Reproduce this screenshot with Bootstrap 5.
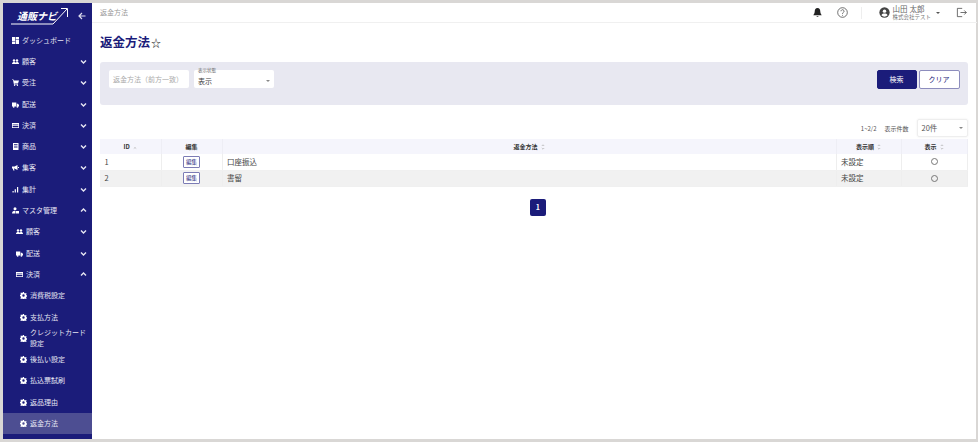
<!DOCTYPE html>
<html lang="ja">
<head>
    <meta charset="UTF-8">
    <meta name="viewport" content="width=device-width, initial-scale=1.0">
    <title>返金方法</title>
    <link href="https://cdn.jsdelivr.net/npm/bootstrap@5.3.0/dist/css/bootstrap.min.css" rel="stylesheet">
    <style>
        html, body { height: 100%; overflow: hidden; }
        body {
            background: #d9d7d5;
            padding: 3px 2px 3px 3px;
            font-family: "Noto Sans CJK JP", "Liberation Sans", sans-serif;
            font-size: 7px;
            color: #444;
        }
        .app-frame { height: 436px; background: #fff; }
        .side-bar { width: 89px; background: #1b1c7a; color: #e6e6f2; flex-shrink: 0; }
        .side-logo { height: 26.5px; padding: 3px 6px 0 8px; }
        .back-arrow { margin-top: 5.5px; }
        .side-item { height: 21.3px; padding: 0 5px 0 9px; gap: 3px; white-space: nowrap; }
        .side-item .side-label { flex: 1; line-height: 11px; white-space: normal; }
        .side-item.lvl-2 { padding-left: 13px; }
        .side-item.lvl-3 { padding-left: 17px; }
        .side-item.is-active { background: #4d4e92; }
        .side-ic { width: 7px; height: 7px; flex-shrink: 0; fill: #fff; }
        .side-chev { width: 7px; height: 7px; flex-shrink: 0; fill: none; stroke: #e6e6f2; stroke-width: 1.4; }
        .top-bar { height: 20px; border-bottom: 1px solid #f0f0f0; padding: 0 10px 0 8px; color: #999; }
        .top-ic { width: 11px; height: 11px; flex-shrink: 0; }
        .top-gap { margin-left: 14px; }
        .top-sep { width: 1px; height: 12px; background: #eee; margin: 0 17px 0 12.500px; }
        .top-user { margin-left: 2.500px; font-family: "Liberation Sans", "Noto Sans CJK JP", sans-serif; }
        .user-name { font-size: 7.500px; line-height: 9px; color: #666; }
        .user-co { font-size: 5.500px; line-height: 7px; color: #777; }
        .user-caret { border-top: 2px solid #555; border-left: 2px solid transparent; border-right: 2px solid transparent; margin: 0 16px 0 4.500px; }
        .page-body { padding: 0 9px 0 8px; }
        .page-title { font-size: 12.500px; font-weight: 700; color: #1b1c7a; margin: 10px 0 11px; line-height: 17px; }
        .page-title span { font-weight: 400; color: #222; font-size: 10px; margin-left: 1px; }
        .search-box { height: 43px; background: #e8e8f1; border-radius: 3px; padding: 8px 8px 0 9px; }
        .fake-input { width: 80px; height: 18px; background: #fff; border-radius: 2px; padding: 0 4px; color: #aaa; position: relative; }
        .fake-select { color: #444; margin-left: 5px; padding-top: 4px; }
        .fake-tag { position: absolute; top: -3px; left: 4px; font-size: 4.500px; line-height: 6px; color: #666; }
        .select-caret { border-top: 2px solid #888; border-left: 2px solid transparent; border-right: 2px solid transparent; }
        .act-btn { height: 19px; font-size: 7px; padding: 0; border-radius: 2px; --bs-btn-border-width: 1px; }
        .act-primary { width: 40px; background: #1b1c7a; border-color: #1b1c7a; color: #fff; }
        .act-outline { width: 41px; background: #fff; border-color: #8d8dbd; color: #1b1c7a; margin-left: 2px; }
        .pager-row { height: 34px; padding-top: 12px; color: #555; font-size: 6px; }
        .count-text { margin-right: 8px; }
        .page-select { width: 51px; height: 18px; border: 1px solid #eee; border-radius: 2px; padding: 0 4px; margin-left: 8px; font-size: 7.500px; box-shadow: 0 0 2px rgba(0,0,0,.08); }
        .data-table { table-layout: fixed; width: 867px; margin: 0; font-size: 7.500px; color: #444; }
        .data-table th { height: 15px; padding: 0; background: #f5f5fc; font-size: 6px; font-weight: 700; color: #333; text-align: center; border: 0; border-right: 1px solid #eeeef5; vertical-align: middle; }
        .data-table td { height: 16px; padding: 0 0 0 4.500px; border: 0; border-right: 1px solid #eee; border-bottom: 1px solid #f0f0f0; vertical-align: middle; line-height: 1; }
        .data-table td.cell-center { padding: 0; }
        .data-table tr.row-alt td { background: #f1f1f1; }
        .sort-mark { width: 4px; height: 6px; margin-left: 3px; vertical-align: -1px; fill: none; stroke: #aaa; stroke-width: .7; }
        .edit-btn { width: 17px; height: 12px; border: 1px solid #7c7cb5; border-radius: 1px; background: #fff; color: #1b1c7a; font-size: 5.500px; line-height: 10px; padding: 0; display: block; margin: 0 auto; }
        .round-mark { width: 7px; height: 7px; border: 1px solid #777; border-radius: 50%; display: block; margin: 0 auto; }
        .page-one { width: 16px; height: 17px; border-radius: 2px; background: #1b1c7a; color: #fff; font-size: 7px; font-weight: 700; margin: 12px 0 0 8px; }
    </style>
</head>
<body>
    <div class="app-frame d-flex">
        <!-- sidebar -->
        <nav class="side-bar">
            <div class="side-logo d-flex align-items-start justify-content-between">
                <svg width="58" height="20" viewBox="0 0 58 20">
                    <path d="M0 18H42L56 3" fill="none" stroke="#fff" stroke-width="1"/>
                    <path d="M50 2.500H56.500V11" fill="none" stroke="#fff" stroke-width="1"/>
                    <text x="6" y="14" font-size="10" font-weight="700" font-style="italic" fill="#fff">通販ナビ</text>
                </svg>
                <svg class="back-arrow" width="8" height="8" viewBox="0 0 8 8" fill="none" stroke="#dde" stroke-width="1.200"><path d="M7.500 4H1M4 1L1 4L4 7"/></svg>
            </div>
            <div id="sideMenu"></div>
        </nav>

        <main class="flex-grow-1 d-flex flex-column">
            <div class="top-bar d-flex align-items-center">
                <span class="flex-grow-1">返金方法</span>
                <svg class="top-ic" viewBox="0 0 16 16" fill="#222"><path d="M8 1.500c-2.800 0-4 2.200-4 4.500 0 3-1.500 4.500-2 5.500v.5h12v-.5c-.5-1-2-2.500-2-5.500 0-2.300-1.200-4.500-4-4.500zM6.300 13.500a1.800 1.800 0 0 0 3.400 0z"/></svg>
                <svg class="top-ic top-gap" viewBox="0 0 16 16" fill="none" stroke="#444" stroke-width="1.100"><circle cx="8" cy="8" r="7"/><path d="M5.800 6.200a2.200 2.200 0 1 1 3.400 1.800c-.8.500-1.200 1-1.200 2M8 11.500v1.200"/></svg>
                <span class="top-sep"></span>
                <svg class="top-ic" viewBox="0 0 16 16"><circle cx="8" cy="8" r="7.500" fill="#444"/><circle cx="8" cy="6" r="2.500" fill="#fff"/><path d="M3.500 12c1-2 2.500-2.500 4.500-2.500s3.500.5 4.500 2.500a6 6 0 0 1-9 0z" fill="#fff"/></svg>
                <div class="top-user">
                    <div class="user-name">山田 太郎</div>
                    <div class="user-co">株式会社テスト</div>
                </div>
                <span class="user-caret"></span>
                <svg class="top-ic" viewBox="0 0 16 16" fill="none" stroke="#444" stroke-width="1.100"><path d="M9 2H2v12h7M6.500 8H15M12 5l3 3-3 3"/></svg>
            </div>

            <div class="page-body">
                <h1 class="page-title">返金方法<span>☆</span></h1>

                <div class="search-box d-flex align-items-start">
                    <div class="fake-input d-flex align-items-center">返金方法（前方一致）</div>
                    <div class="fake-input fake-select d-flex align-items-center justify-content-between">
                        <span class="fake-tag">表示状態</span>
                        <span>表示</span>
                        <span class="select-caret"></span>
                    </div>
                    <button class="btn act-btn act-primary ms-auto" type="button">検索</button>
                    <button class="btn act-btn act-outline" type="button">クリア</button>
                </div>

                <div class="pager-row d-flex align-items-center justify-content-end">
                    <span class="count-text">1~2/2</span>
                    <span>表示件数</span>
                    <div class="page-select d-flex align-items-center justify-content-between">
                        <span>20件</span>
                        <span class="select-caret"></span>
                    </div>
                </div>

                <table class="table data-table">
                    <colgroup>
                        <col style="width:61px"><col style="width:61px"><col style="width:614px"><col style="width:65px"><col style="width:66px">
                    </colgroup>
                    <thead>
                        <tr>
                            <th>ID<svg class="sort-mark" viewBox="0 0 4 6"><path d="M.8 4.500L2 3.500L3.200 4.500"/></svg></th>
                            <th>編集</th>
                            <th>返金方法<svg class="sort-mark" viewBox="0 0 4 6"><path d="M.8 2L2 .8L3.200 2M.8 4L2 5.200L3.200 4"/></svg></th>
                            <th>表示順<svg class="sort-mark" viewBox="0 0 4 6"><path d="M.8 2L2 .8L3.200 2M.8 4L2 5.200L3.200 4"/></svg></th>
                            <th>表示<svg class="sort-mark" viewBox="0 0 4 6"><path d="M.8 2L2 .8L3.200 2M.8 4L2 5.200L3.200 4"/></svg></th>
                        </tr>
                    </thead>
                    <tbody>
                        <tr>
                            <td>1</td>
                            <td class="cell-center"><button class="edit-btn" type="button">編集</button></td>
                            <td>口座振込</td>
                            <td>未設定</td>
                            <td class="cell-center"><span class="round-mark"></span></td>
                        </tr>
                        <tr class="row-alt">
                            <td>2</td>
                            <td class="cell-center"><button class="edit-btn" type="button">編集</button></td>
                            <td>書留</td>
                            <td>未設定</td>
                            <td class="cell-center"><span class="round-mark"></span></td>
                        </tr>
                    </tbody>
                </table>

                <div class="d-flex justify-content-center">
                    <div class="page-one d-flex align-items-center justify-content-center">1</div>
                </div>
            </div>
        </main>
    </div>

    <script src="https://cdn.jsdelivr.net/npm/bootstrap@5.3.0/dist/js/bootstrap.bundle.min.js"></script>
    <script>
        const ICONS = {
            dash: '<path d="M0 0h3.200v4H0zM3.800 0H7v2.500H3.800zM0 4.600h3.200V7H0zM3.800 3.100H7V7H3.800z"/>',
            people: '<circle cx="2" cy="2.500" r="1.200"/><circle cx="5" cy="2.500" r="1.200"/><path d="M0 6c0-1.500 1-2 2-2s1.500.3 1.500.8C3.800 4.300 4.200 4 5 4c1 0 2 .5 2 2z"/>',
            cart: '<path d="M0 .5h1.500l.4 1H7L6 4.500H2.500L2.800 5.200H6v.6H2L1 1.100H0z"/><circle cx="2.600" cy="6.300" r=".7"/><circle cx="5.400" cy="6.300" r=".7"/>',
            truck: '<path d="M0 1.500h4.300v4H0zM4.800 2.700h1.200L7 4v1.500H4.800z"/><circle cx="1.700" cy="5.800" r=".9"/><circle cx="5.400" cy="5.800" r=".9"/>',
            card: '<path d="M0 1h7v5H0zM.7 2.600v.6h5.600v-.6zM.7 4v1.300h5.600V4z" fill-rule="evenodd"/>',
            book: '<path d="M1 0h5.500v7H1zM2 1.200v.7h3.500v-.7zM2 2.800v.7h3.500v-.7zM2 4.400v.7h3.500v-.7z" fill-rule="evenodd"/>',
            horn: '<path d="M0 2.500h2.500L5.500 1v5L2.500 4.500H2L2.500 6.500H1.300L.8 4.500H0zM6 3h1v1H6z"/>',
            bars: '<path d="M.5 5h1.200v1.500H.5zM2.700 3.300h1.200v3.200H2.700zM5 1h1.200v5.500H5z"/>',
            master: '<circle cx="3" cy="1.800" r="1.500"/><path d="M0 6.500C0 4.500 1.500 3.800 3 3.800v2.700zM3.500 4H7v2.500H3.500z"/>',
            gear: '<path fill-rule="evenodd" d="M3 0h1l.2 1 .8.400.9-.5.7.7-.5.9.4.8 1 .2v1l-1 .2-.4.8.5.9-.7.7-.9-.5-.8.4-.2 1H3l-.2-1-.8-.4-.9.5-.7-.7.5-.9L.5 4.200-.5 4V3l1-.2.4-.8-.5-.9.7-.7.9.5.8-.4zM3.500 2.300a1.200 1.200 0 1 0 0 2.400 1.200 1.200 0 0 0 0-2.400z"/>'
        };

        // [label, icon, level, chevron]
        const MENU = [
            ['ダッシュボード', 'dash', 1, ''],
            ['顧客', 'people', 1, 'down'],
            ['受注', 'cart', 1, 'down'],
            ['配送', 'truck', 1, 'down'],
            ['決済', 'card', 1, 'down'],
            ['商品', 'book', 1, 'down'],
            ['集客', 'horn', 1, 'down'],
            ['集計', 'bars', 1, 'down'],
            ['マスタ管理', 'master', 1, 'up'],
            ['顧客', 'people', 2, 'down'],
            ['配送', 'truck', 2, 'down'],
            ['決済', 'card', 2, 'up'],
            ['消費税設定', 'gear', 3, ''],
            ['支払方法', 'gear', 3, ''],
            ['クレジットカード設定', 'gear', 3, ''],
            ['後払い設定', 'gear', 3, ''],
            ['払込票試刷', 'gear', 3, ''],
            ['返品理由', 'gear', 3, ''],
            ['返金方法', 'gear', 3, '']
        ];

        const chevron = dir => dir === '' ? '' :
            '<svg class="side-chev" viewBox="0 0 7 7"><path d="' + (dir === 'down' ? 'M1 2.500L3.500 5L6 2.500' : 'M1 4.500L3.500 2L6 4.500') + '"/></svg>';

        document.getElementById('sideMenu').innerHTML = MENU.map((m, i) =>
            '<div class="side-item d-flex align-items-center lvl-' + m[2] + (i === MENU.length - 1 ? ' is-active' : '') + '">' +
            '<svg class="side-ic" viewBox="0 0 7 7">' + ICONS[m[1]] + '</svg>' +
            '<span class="side-label">' + m[0] + '</span>' + chevron(m[3]) + '</div>'
        ).join('');
    </script>
</body>
</html>
